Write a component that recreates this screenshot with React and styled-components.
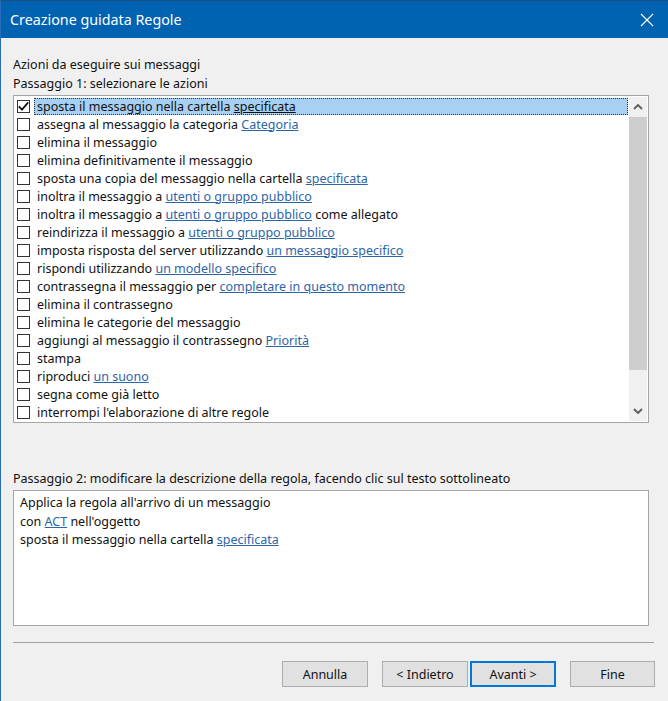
import React from 'react';
import styled, { createGlobalStyle } from 'styled-components';

const GlobalStyle = createGlobalStyle`
  html, body {
    margin: 0;
    padding: 0;
    background: #f0f0f0;
  }
`;

const Window = styled.div`
  width: 668px;
  height: 701px;
  box-sizing: border-box;
  border-left: 1px solid #2a6cb8;
  background: #f0f0f0;
  display: flex;
  flex-direction: column;
  font-family: 'Noto Sans', 'Open Sans', sans-serif;
  font-size: 12.5px;
  color: #111;
  overflow: hidden;
`;

const TitleBar = styled.div`
  height: 38px;
  flex: none;
  background: #0063b1;
  border-top: 1px solid #1b4f80;
  box-sizing: border-box;
  display: flex;
  align-items: center;
  justify-content: space-between;
  padding: 0 14px 0 9px;
  color: #fff;
`;

const Title = styled.span`
  font-size: 14.3px;
`;

const Body = styled.div`
  flex: 1;
  display: flex;
  flex-direction: column;
  padding: 18px 14px 0 12px;
`;

const Label = styled.div`
  line-height: 18px;
  height: 18px;
  margin-bottom: ${(p) => p.$gap || 1}px;
  white-space: nowrap;
`;

const ListBox = styled.div`
  height: 328px;
  width: 636px;
  flex: none;
  box-sizing: border-box;
  border: 1px solid #a6a6a6;
  background: #fff;
  display: flex;
  padding: 1px 0 1px 1px;
  margin-bottom: 47px;
`;

const Rows = styled.div`
  flex: 1;
  display: flex;
  flex-direction: column;
`;

const Row = styled.div`
  height: 18px;
  flex: none;
  display: flex;
  align-items: center;
  padding-left: 2px;
`;

const Box = styled.span`
  width: 13px;
  height: 13px;
  box-sizing: border-box;
  border: 1px solid #333;
  background: #fff;
  flex: none;
  display: flex;
  align-items: center;
  justify-content: center;
`;

const RowText = styled.span`
  flex: 1;
  height: 17px;
  line-height: 15px;
  margin-left: 4px;
  padding-left: 2px;
  box-sizing: border-box;
  white-space: nowrap;
  background: ${(p) => (p.$selected ? '#a8d0f2' : 'transparent')};
  border: 1px ${(p) => (p.$selected ? 'dotted #333' : 'solid transparent')};
`;

const Link = styled.span`
  color: ${(p) => (p.$plain ? 'inherit' : '#2e64a8')};
  text-decoration: underline;
  text-underline-offset: 1px;
`;

const ScrollBar = styled.div`
  width: 18px;
  margin-left: 1px;
  margin-right: 1px;
  background: #f0f0f0;
  display: flex;
  flex-direction: column;
`;

const Arrow = styled.div`
  height: 20px;
  flex: none;
  display: flex;
  align-items: center;
  justify-content: center;
`;

const Track = styled.div`
  flex: 1;
  display: flex;
  flex-direction: column;
  padding-bottom: 31px;
`;

const Thumb = styled.div`
  flex: 1;
  background: #cdcdcd;
`;

const DescBox = styled.div`
  width: 636px;
  height: 136px;
  flex: none;
  box-sizing: border-box;
  border: 1px solid #a6a6a6;
  background: #fff;
  padding: 3px 6px;
  margin-top: 1px;
`;

const DescLine = styled.div`
  line-height: 18.5px;
  white-space: nowrap;
`;

const Separator = styled.div`
  width: 641px;
  height: 0;
  flex: none;
  border-top: 1px solid #a0a0a0;
  margin-top: 16px;
`;

const ButtonRow = styled.div`
  display: flex;
  justify-content: flex-end;
  margin-top: 18px;
  margin-right: -1px;
`;

const Button = styled.button`
  width: ${(p) => (p.$small ? 85 : 86)}px;
  height: 26px;
  box-sizing: border-box;
  margin-left: ${(p) => p.$ml}px;
  background: #e1e1e1;
  border: ${(p) => (p.$default ? '2px solid #0078d7' : '1px solid #adadad')};
  font-family: inherit;
  font-size: 12.5px;
  color: #111;
  padding: 0;
  cursor: pointer;
`;

const Check = () => (
  <svg width="11" height="11" viewBox="0 0 11 11">
    <polyline points="0.8,5.3 4,8.6 10.2,1.4" fill="none" stroke="#111" strokeWidth="1.8" />
  </svg>
);

const Chevron = ({ down }) => (
  <svg width="10" height="6" viewBox="0 0 10 6">
    <polyline
      points={down ? '1,1 5,5 9,1' : '1,5 5,1 9,5'}
      fill="none"
      stroke="#606060"
      strokeWidth="1.9"
    />
  </svg>
);

const CloseIcon = () => (
  <svg width="14" height="14" viewBox="0 0 14 14">
    <path d="M1 1 L13 13 M13 1 L1 13" stroke="#fff" strokeWidth="1.1" />
  </svg>
);

const actions = [
  ['sposta il messaggio nella cartella ', 'specificata'],
  ['assegna al messaggio la categoria ', 'Categoria'],
  ['elimina il messaggio'],
  ['elimina definitivamente il messaggio'],
  ['sposta una copia del messaggio nella cartella ', 'specificata'],
  ['inoltra il messaggio a ', 'utenti o gruppo pubblico'],
  ['inoltra il messaggio a ', 'utenti o gruppo pubblico', ' come allegato'],
  ['reindirizza il messaggio a ', 'utenti o gruppo pubblico'],
  ['imposta risposta del server utilizzando ', 'un messaggio specifico'],
  ['rispondi utilizzando ', 'un modello specifico'],
  ['contrassegna il messaggio per ', 'completare in questo momento'],
  ['elimina il contrassegno'],
  ['elimina le categorie del messaggio'],
  ['aggiungi al messaggio il contrassegno ', 'Priorità'],
  ['stampa'],
  ['riproduci ', 'un suono'],
  ['segna come già letto'],
  ["interrompi l'elaborazione di altre regole"],
];

export default function App() {
  return (
    <Window>
      <GlobalStyle />
      <TitleBar>
        <Title>Creazione guidata Regole</Title>
        <CloseIcon />
      </TitleBar>
      <Body>
        <Label>Azioni da eseguire sui messaggi</Label>
        <Label $gap={2}>Passaggio 1: selezionare le azioni</Label>
        <ListBox>
          <Rows>
            {actions.map(([text, link, rest], i) => (
              <Row key={i}>
                <Box>{i === 0 && <Check />}</Box>
                <RowText $selected={i === 0}>
                  {text}
                  {link && <Link $plain={i === 0}>{link}</Link>}
                  {rest}
                </RowText>
              </Row>
            ))}
          </Rows>
          <ScrollBar>
            <Arrow>
              <Chevron />
            </Arrow>
            <Track>
              <Thumb />
            </Track>
            <Arrow>
              <Chevron down />
            </Arrow>
          </ScrollBar>
        </ListBox>
        <Label>Passaggio 2: modificare la descrizione della regola, facendo clic sul testo sottolineato</Label>
        <DescBox>
          <DescLine>Applica la regola all'arrivo di un messaggio</DescLine>
          <DescLine>
            con <Link>ACT</Link> nell'oggetto
          </DescLine>
          <DescLine>
            sposta il messaggio nella cartella <Link>specificata</Link>
          </DescLine>
        </DescBox>
        <Separator />
        <ButtonRow>
          <Button $ml={0}>Annulla</Button>
          <Button $ml={14}>&lt; Indietro</Button>
          <Button $ml={2} $default>Avanti &gt;</Button>
          <Button $ml={14} $small>Fine</Button>
        </ButtonRow>
      </Body>
    </Window>
  );
}
